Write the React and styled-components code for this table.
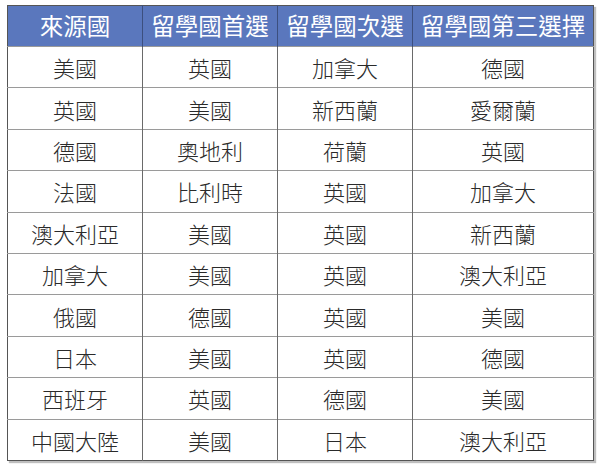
import React from "react";
import styled, { createGlobalStyle } from "styled-components";

const Global = createGlobalStyle`
  html, body { margin: 0; padding: 0; background: #ffffff; }
`;

const Page = styled.div`
  width: 600px;
  height: 466px;
  padding: 5px 0 0 7px;
  box-sizing: border-box;
  background: #fff;
`;

const Table = styled.table`
  border-collapse: collapse;
  table-layout: fixed;
  width: 586px;
  border: 1px solid #555;
  box-shadow: 2px 2px 1px rgba(0, 0, 0, 0.25);
  font-family: "Noto Sans CJK TC", "Noto Sans CJK SC", sans-serif;
`;

const HeadCell = styled.th`
  height: 40px;
  padding: 0;
  background: #5a77bd;
  color: #ffffff;
  font-size: 23.5px;
  font-weight: 400;
  text-align: center;
  vertical-align: middle;
  border-left: 1px solid #3c4f7e;
  line-height: 1;
  white-space: nowrap;
  &:first-child { border-left: none; }
`;

const Row = styled.tr`
  border-top: 1px solid #9a9a9a;
`;

const Cell = styled.td`
  height: 40.4px;
  padding: 0;
  color: #2a2a2a;
  font-size: 22px;
  font-weight: 300;
  text-align: center;
  vertical-align: middle;
  border-left: 1px solid #6a6a6a;
  line-height: 1;
  white-space: nowrap;
  &:first-child { border-left: none; }
`;

const headers = ["來源國", "留學國首選", "留學國次選", "留學國第三選擇"];
const rows = [
  ["美國", "英國", "加拿大", "德國"],
  ["英國", "美國", "新西蘭", "愛爾蘭"],
  ["德國", "奧地利", "荷蘭", "英國"],
  ["法國", "比利時", "英國", "加拿大"],
  ["澳大利亞", "美國", "英國", "新西蘭"],
  ["加拿大", "美國", "英國", "澳大利亞"],
  ["俄國", "德國", "英國", "美國"],
  ["日本", "美國", "英國", "德國"],
  ["西班牙", "英國", "德國", "美國"],
  ["中國大陸", "美國", "日本", "澳大利亞"],
];
const widths = [135, 135, 135, 181];

export default function App() {
  return (
    <Page>
      <Global />
      <Table>
        <colgroup>
          {widths.map((w, i) => (
            <col key={i} style={{ width: w }} />
          ))}
        </colgroup>
        <thead>
          <tr>
            {headers.map((h) => (
              <HeadCell key={h}>{h}</HeadCell>
            ))}
          </tr>
        </thead>
        <tbody>
          {rows.map((r, i) => (
            <Row key={i}>
              {r.map((c, j) => (
                <Cell key={j}>{c}</Cell>
              ))}
            </Row>
          ))}
        </tbody>
      </Table>
    </Page>
  );
}
